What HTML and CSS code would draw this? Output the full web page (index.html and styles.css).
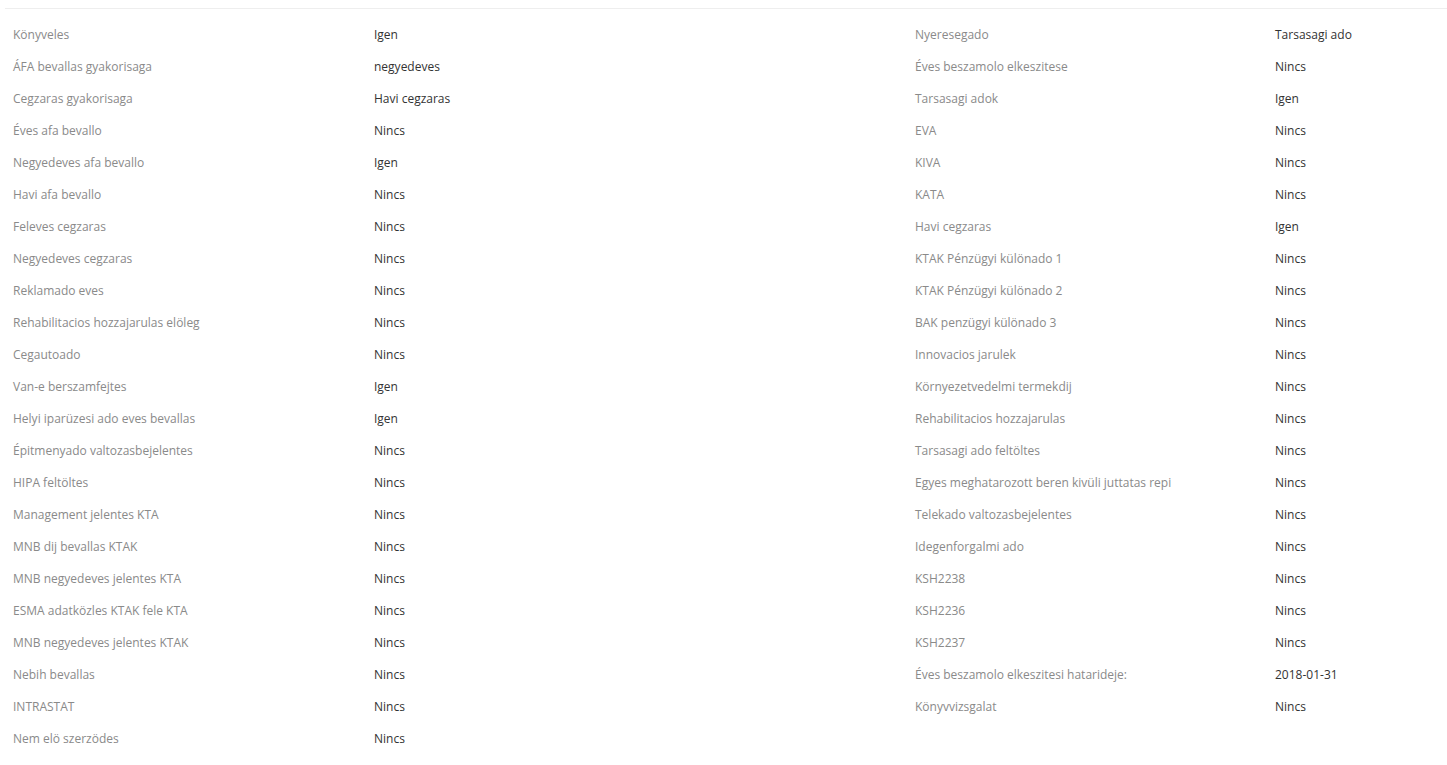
FILE: index.html
```html
<!DOCTYPE html>
<html lang="hu">
<head>
<meta charset="utf-8">
<title>Adatok</title>
<link rel="stylesheet" href="styles.css">
</head>
<body>
<div class="panel">
  <div class="col col-left">
    <div class="row"><div class="label">Könyveles</div><div class="value">Igen</div></div>
    <div class="row"><div class="label">ÁFA bevallas gyakorisaga</div><div class="value">negyedeves</div></div>
    <div class="row"><div class="label">Cegzaras gyakorisaga</div><div class="value">Havi cegzaras</div></div>
    <div class="row"><div class="label">Éves afa bevallo</div><div class="value">Nincs</div></div>
    <div class="row"><div class="label">Negyedeves afa bevallo</div><div class="value">Igen</div></div>
    <div class="row"><div class="label">Havi afa bevallo</div><div class="value">Nincs</div></div>
    <div class="row"><div class="label">Feleves cegzaras</div><div class="value">Nincs</div></div>
    <div class="row"><div class="label">Negyedeves cegzaras</div><div class="value">Nincs</div></div>
    <div class="row"><div class="label">Reklamado eves</div><div class="value">Nincs</div></div>
    <div class="row"><div class="label">Rehabilitacios hozzajarulas elöleg</div><div class="value">Nincs</div></div>
    <div class="row"><div class="label">Cegautoado</div><div class="value">Nincs</div></div>
    <div class="row"><div class="label">Van-e berszamfejtes</div><div class="value">Igen</div></div>
    <div class="row"><div class="label">Helyi iparüzesi ado eves bevallas</div><div class="value">Igen</div></div>
    <div class="row"><div class="label">Épitmenyado valtozasbejelentes</div><div class="value">Nincs</div></div>
    <div class="row"><div class="label">HIPA feltöltes</div><div class="value">Nincs</div></div>
    <div class="row"><div class="label">Management jelentes KTA</div><div class="value">Nincs</div></div>
    <div class="row"><div class="label">MNB dij bevallas KTAK</div><div class="value">Nincs</div></div>
    <div class="row"><div class="label">MNB negyedeves jelentes KTA</div><div class="value">Nincs</div></div>
    <div class="row"><div class="label">ESMA adatközles KTAK fele KTA</div><div class="value">Nincs</div></div>
    <div class="row"><div class="label">MNB negyedeves jelentes KTAK</div><div class="value">Nincs</div></div>
    <div class="row"><div class="label">Nebih bevallas</div><div class="value">Nincs</div></div>
    <div class="row"><div class="label">INTRASTAT</div><div class="value">Nincs</div></div>
    <div class="row"><div class="label">Nem elö szerzödes</div><div class="value">Nincs</div></div>
  </div>
  <div class="col col-right">
    <div class="row"><div class="label">Nyeresegado</div><div class="value">Tarsasagi ado</div></div>
    <div class="row"><div class="label">Éves beszamolo elkeszitese</div><div class="value">Nincs</div></div>
    <div class="row"><div class="label">Tarsasagi adok</div><div class="value">Igen</div></div>
    <div class="row"><div class="label">EVA</div><div class="value">Nincs</div></div>
    <div class="row"><div class="label">KIVA</div><div class="value">Nincs</div></div>
    <div class="row"><div class="label">KATA</div><div class="value">Nincs</div></div>
    <div class="row"><div class="label">Havi cegzaras</div><div class="value">Igen</div></div>
    <div class="row"><div class="label">KTAK Pénzügyi különado 1</div><div class="value">Nincs</div></div>
    <div class="row"><div class="label">KTAK Pénzügyi különado 2</div><div class="value">Nincs</div></div>
    <div class="row"><div class="label">BAK penzügyi különado 3</div><div class="value">Nincs</div></div>
    <div class="row"><div class="label">Innovacios jarulek</div><div class="value">Nincs</div></div>
    <div class="row"><div class="label">Környezetvedelmi termekdij</div><div class="value">Nincs</div></div>
    <div class="row"><div class="label">Rehabilitacios hozzajarulas</div><div class="value">Nincs</div></div>
    <div class="row"><div class="label">Tarsasagi ado feltöltes</div><div class="value">Nincs</div></div>
    <div class="row"><div class="label">Egyes meghatarozott beren kivüli juttatas repi</div><div class="value">Nincs</div></div>
    <div class="row"><div class="label">Telekado valtozasbejelentes</div><div class="value">Nincs</div></div>
    <div class="row"><div class="label">Idegenforgalmi ado</div><div class="value">Nincs</div></div>
    <div class="row"><div class="label">KSH2238</div><div class="value">Nincs</div></div>
    <div class="row"><div class="label">KSH2236</div><div class="value">Nincs</div></div>
    <div class="row"><div class="label">KSH2237</div><div class="value">Nincs</div></div>
    <div class="row"><div class="label">Éves beszamolo elkeszitesi hatarideje:</div><div class="value">2018-01-31</div></div>
    <div class="row"><div class="label">Könyvvizsgalat</div><div class="value">Nincs</div></div>
  </div>
</div>
</body>
</html>
```
FILE: styles.css
```css
html, body {
  margin: 0;
  padding: 0;
  background: #fff;
}
body {
  font-family: "Open Sans", "Liberation Sans", sans-serif;
  font-size: 12px;
  color: #333;
}
.panel {
  margin: 8px 0 0 5px;
  border-top: 1px solid #eeeeee;
  padding-top: 10px;
  display: grid;
  grid-template-columns: 902px 1fr;
}
.col-left .row {
  display: grid;
  grid-template-columns: 361px 1fr;
}
.col-right .row {
  display: grid;
  grid-template-columns: 360px 1fr;
}
.label, .value {
  padding: 8px;
  line-height: 16px;
  white-space: nowrap;
}
.label {
  color: #8a8a8a;
}
.value {
  color: #333333;
}
```
